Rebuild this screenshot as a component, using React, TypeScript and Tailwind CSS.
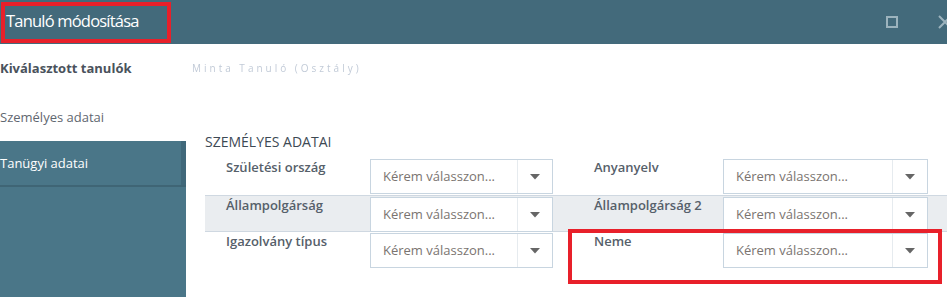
import React from "react";

function Caret() {
  return (
    <svg width="10" height="6" viewBox="0 0 10 6" className="block">
      <path d="M0 0 L10 0 L5 5.5 Z" fill="#666" />
    </svg>
  );
}

function Select({ width }: { width: string }) {
  return (
    <div className={`${width} h-[35px] mt-[1px] border border-[#c8d5e0] bg-white flex`}>
      <div className="flex-1 flex items-center pl-[12px] text-[13px] text-[#7a7470] whitespace-nowrap">
        Kérem válasszon...
      </div>
      <div className="w-[35px] border-l border-[#e6ebef] flex items-center justify-center">
        <Caret />
      </div>
    </div>
  );
}

function Row({
  l1,
  l2,
  band,
}: {
  l1: string;
  l2: string;
  band?: boolean;
}) {
  return (
    <div
      className={`h-[37px] flex pl-[21px] ${
        band ? "bg-[#eaedf0] border-y border-[#cfd8e1]" : ""
      }`}
    >
      <div className="w-[144px] -mt-[1px] text-[13px] font-semibold text-[#56606a] leading-[20px]">
        {l1}
      </div>
      <Select width="w-[183px]" />
      <div className="w-[41px]" />
      <div className="w-[129px] -mt-[1px] text-[13px] font-semibold text-[#56606a] leading-[20px]">
        {l2}
      </div>
      <Select width="w-[205px]" />
    </div>
  );
}

export default function App() {
  return (
    <div
      className="relative w-[947px] h-[297px] overflow-hidden bg-white"
      style={{ fontFamily: '"Open Sans", "Noto Sans", sans-serif' }}
    >
      {/* Header */}
      <div className="h-[44px] bg-[#436a7b] flex items-center pl-[6px]">
        <div className="text-[16.5px] tracking-[-0.8px] text-white leading-none -mt-[1px]">Tanuló módosítása</div>
        <div className="flex-1" />
        <div className="w-[12px] h-[12px] border-2 border-[#9cb3bd] mr-[40px]" />
        <svg width="14" height="14" viewBox="0 0 14 14" className="mr-[-5px]">
          <path d="M1 1 L13 13 M13 1 L1 13" stroke="#9cb3bd" strokeWidth="2" />
        </svg>
      </div>

      {/* Selected students */}
      <div className="h-[49px] flex items-center">
        <div className="w-[192px] text-[13px] font-bold text-[#4a525c]">Kiválasztott tanulók</div>
        <div className="text-[10px] text-[#a7b4c6] tracking-[3px] blur-[0.6px] opacity-70 whitespace-nowrap">
          Minta Tanuló (Osztály)
        </div>
      </div>

      <div className="flex">
        {/* Sidebar */}
        <div className="w-[186px] flex flex-col">
          <div className="h-[48px] flex items-center pt-[2px] text-[13px] text-[#5f6770]">Személyes adatai</div>
          <div className="h-[156px] bg-[#4a7688] flex flex-col">
            <div className="h-[46px] flex border-b-2 border-[#3f6575]">
              <div className="flex-1 flex items-center pt-[2px] text-[13px] text-white">Tanügyi adatai</div>
              <div className="w-[5px] bg-[#40687a]" />
            </div>
          </div>
        </div>

        {/* Content */}
        <div className="flex-1 pl-[19px] pt-[39px]">
          <div className="text-[14px] text-[#3d4954] leading-[20px] uppercase">Személyes adatai</div>
          <div className="mt-[6px]">
            <Row l1="Születési ország" l2="Anyanyelv" />
            <Row l1="Állampolgárság" l2="Állampolgárság 2" band />
            <Row l1="Igazolvány típus" l2="Neme" />
          </div>
        </div>
      </div>

      {/* Annotation boxes */}
      <div className="absolute left-[1px] top-[2px] w-[170px] h-[41px] border-4 border-[#e8202a]" />
      <div className="absolute left-[568px] top-[229px] w-[374px] h-[55px] border-4 border-[#e8202a]" />
    </div>
  );
}
